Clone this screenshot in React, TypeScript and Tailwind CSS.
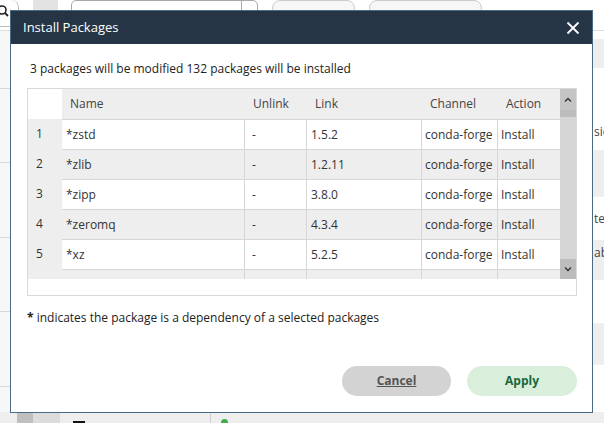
import React from "react";

const rows = [
  { i: 1, name: "*zstd", unlink: "-", link: "1.5.2", ch: "conda-forge", act: "Install" },
  { i: 2, name: "*zlib", unlink: "-", link: "1.2.11", ch: "conda-forge", act: "Install" },
  { i: 3, name: "*zipp", unlink: "-", link: "3.8.0", ch: "conda-forge", act: "Install" },
  { i: 4, name: "*zeromq", unlink: "-", link: "4.3.4", ch: "conda-forge", act: "Install" },
  { i: 5, name: "*xz", unlink: "-", link: "5.2.5", ch: "conda-forge", act: "Install" },
];

function Background() {
  return (
    <div className="flex flex-col w-full h-full">
      {/* top bar */}
      <div className="h-[31px] bg-white flex items-start border-b border-[#dcdcdc] shrink-0">
        <div className="w-[19px] h-[27px] border border-[#bbb] rounded-br-[8px] rounded-tr-[8px] border-l-0 border-t-0 flex items-start pt-[5px]">
          <svg width="12" height="12" viewBox="0 0 12 12" className="ml-[-3px]">
            <circle cx="5" cy="5" r="4" fill="none" stroke="#222" strokeWidth="1.6" />
            <line x1="8" y1="8" x2="11" y2="11" stroke="#222" strokeWidth="1.8" />
          </svg>
        </div>
        <div className="ml-[14px] w-[25px] h-[12px] bg-[#e3e3e3]" />
        <div className="ml-[13px] w-[187px] h-[22px] border border-[#aaa] rounded-[5px] flex justify-end">
          <div className="w-[16px] border-l border-[#aaa]" />
        </div>
        <div className="ml-[14px] w-[83px] h-[16px] border border-[#ccc] rounded-[9px] bg-[#f7f7f7]" />
        <div className="ml-[14px] w-[113px] h-[16px] border border-[#ccc] rounded-[9px] bg-[#f7f7f7]" />
      </div>
      <div className="flex flex-1">
        {/* left strip */}
        <div className="w-[10px] bg-[#f7f7f7] flex flex-col">
          <div className="h-[58px] border-b border-[#d8d8d8]" />
          <div className="h-[74px] border-b border-[#d8d8d8]" />
          <div className="h-[75px] border-b border-[#d8d8d8]" />
          <div className="h-[74px] border-b border-[#d8d8d8]" />
          <div className="h-[75px] border-b border-[#d8d8d8]" />
        </div>
        <div className="flex-1 bg-white" />
        {/* right strip */}
        <div className="w-[11px] flex flex-col text-[12px] text-[#444] leading-none overflow-hidden whitespace-nowrap">
          <div className="h-[8px] bg-white" />
          <div className="h-[29px] bg-[#eeeeee]" />
          <div className="h-[45px] bg-white" />
          <div className="h-[37px] bg-white flex items-center pl-[1px]">sio</div>
          <div className="h-[47px] bg-[#eeeeee]" />
          <div className="h-[43px] bg-white flex items-center pl-[1px]">te</div>
          <div className="h-[40px] bg-[#eeeeee] flex items-start pt-[7px] pl-[1px]">ab</div>
          <div className="h-[43px] bg-white" />
          <div className="h-[42px] bg-[#eeeeee]" />
          <div className="flex-1 bg-white" />
        </div>
      </div>
      {/* bottom strip */}
      <div className="h-[11px] bg-[#eeeeee] flex shrink-0">
        <div className="w-[17px]" />
        <div className="w-[16px] bg-[#bfbfbf]" />
        <div className="w-[27px] bg-[#dcdcdc]" />
        <div className="w-[13px]" />
        <div className="w-[12px] h-[2px] mt-[9px] bg-[#111]" />
        <div className="w-[126px] border-r border-[#cfcfcf]" />
        <div className="ml-[10px] w-[7px] h-[4px] mt-[7px] rounded-t-full bg-[#3fae49]" />
      </div>
    </div>
  );
}

export default function App() {
  return (
    <div
      className="relative w-[604px] h-[423px] overflow-hidden bg-[#efefef]"
      style={{ fontFamily: '"Open Sans", "Noto Sans", sans-serif' }}
    >
      <Background />
      {/* dialog */}
      <div className="absolute left-[10px] top-[10px] w-[583px] h-[403px] border border-[#4a6a86] bg-white flex flex-col">
        <div className="h-[33px] bg-[#253546] flex items-center justify-between pl-[12px] pr-[12px] shrink-0">
          <span className="text-white text-[13px]">Install Packages</span>
          <svg width="14" height="14" viewBox="0 0 14 14">
            <path d="M1.5 1.5 L12.5 12.5 M12.5 1.5 L1.5 12.5" stroke="#fff" strokeWidth="1.8" />
          </svg>
        </div>
        <div className="flex flex-col flex-1 pl-[16px] pr-[15px]">
          <div className="mt-[17px] text-[12px] text-[#222] pl-[3px] leading-[16px]">
            3 packages will be modified 132 packages will be installed
          </div>
          {/* table */}
          <div className="mt-[11px] border border-[#d9d9d9] h-[208px] flex flex-col">
            <div className="flex h-[190px]">
              <div className="flex-1 flex flex-col text-[12px] text-[#333]">
                {/* header */}
                <div className="flex h-[30px] shrink-0 text-[#444]">
                  <div className="w-[34px] bg-white" />
                  <div className="flex-1 bg-[#eeeeee] flex items-center">
                    <div className="w-[183px] pl-[8px]">Name</div>
                    <div className="w-[62px] pl-[8px]">Unlink</div>
                    <div className="w-[115px] pl-[8px]">Link</div>
                    <div className="w-[76px] pl-[8px]">Channel</div>
                    <div className="flex-1 pl-[8px]">Action</div>
                  </div>
                </div>
                {rows.map((r, idx) => {
                  const bg = idx % 2 === 0 ? "bg-white" : "bg-[#eeeeee]";
                  return (
                    <div key={r.i} className="flex h-[30px] shrink-0">
                      <div className="w-[34px] bg-[#eeeeee] flex items-center pl-[8px]">{r.i}</div>
                      <div className={`flex-1 flex border-t border-[#d6d6d6] ${bg}`}>
                        <div className="w-[183px] border-r border-[#d6d6d6] flex items-center pl-[4px]">{r.name}</div>
                        <div className="w-[62px] border-r border-[#d6d6d6] flex items-center pl-[7px]">{r.unlink}</div>
                        <div className="w-[115px] border-r border-[#d6d6d6] flex items-center pl-[4px]">{r.link}</div>
                        <div className="w-[76px] border-r border-[#d6d6d6] flex items-center pl-[3px]">{r.ch}</div>
                        <div className="flex-1 flex items-center pl-[3px]">{r.act}</div>
                      </div>
                    </div>
                  );
                })}
                <div className="flex flex-1">
                  <div className="w-[34px] bg-[#eeeeee]" />
                  <div className="flex-1 flex border-t border-[#d6d6d6] bg-[#eeeeee]">
                    <div className="w-[183px] border-r border-[#d6d6d6]" />
                    <div className="w-[62px] border-r border-[#d6d6d6]" />
                    <div className="w-[115px] border-r border-[#d6d6d6]" />
                    <div className="w-[76px] border-r border-[#d6d6d6]" />
                    <div className="flex-1" />
                  </div>
                </div>
              </div>
              {/* scrollbar */}
              <div className="w-[16px] bg-[#d6d6d6] flex flex-col">
                <div className="h-[21px] bg-[#c4c4c4] flex items-center justify-center">
                  <svg width="8" height="6" viewBox="0 0 8 6">
                    <path d="M1 4.5 L4 1.5 L7 4.5" fill="none" stroke="#333" strokeWidth="1.4" />
                  </svg>
                </div>
                <div className="h-[7px] bg-[#bdbdbd]" />
                <div className="flex-1" />
                <div className="h-[20px] bg-[#bcbcbc] flex items-center justify-center">
                  <svg width="8" height="6" viewBox="0 0 8 6">
                    <path d="M1 1.5 L4 4.5 L7 1.5" fill="none" stroke="#333" strokeWidth="1.4" />
                  </svg>
                </div>
              </div>
            </div>
            <div className="flex-1 bg-white" />
          </div>
          <div className="mt-[14px] text-[12px] text-[#222] leading-[16px]">
            <span className="font-bold">*</span> indicates the package is a dependency of a selected packages
          </div>
          <div className="flex-1" />
          <div className="flex justify-end gap-[16px] pb-[16px]">
            <button className="w-[109px] h-[30px] rounded-full bg-[#d3d3d3] text-[12px] font-bold text-[#555] underline">
              Cancel
            </button>
            <button className="w-[110px] h-[30px] rounded-full bg-[#d9efdc] text-[12px] font-bold text-[#17693a]">
              Apply
            </button>
          </div>
        </div>
      </div>
    </div>
  );
}
